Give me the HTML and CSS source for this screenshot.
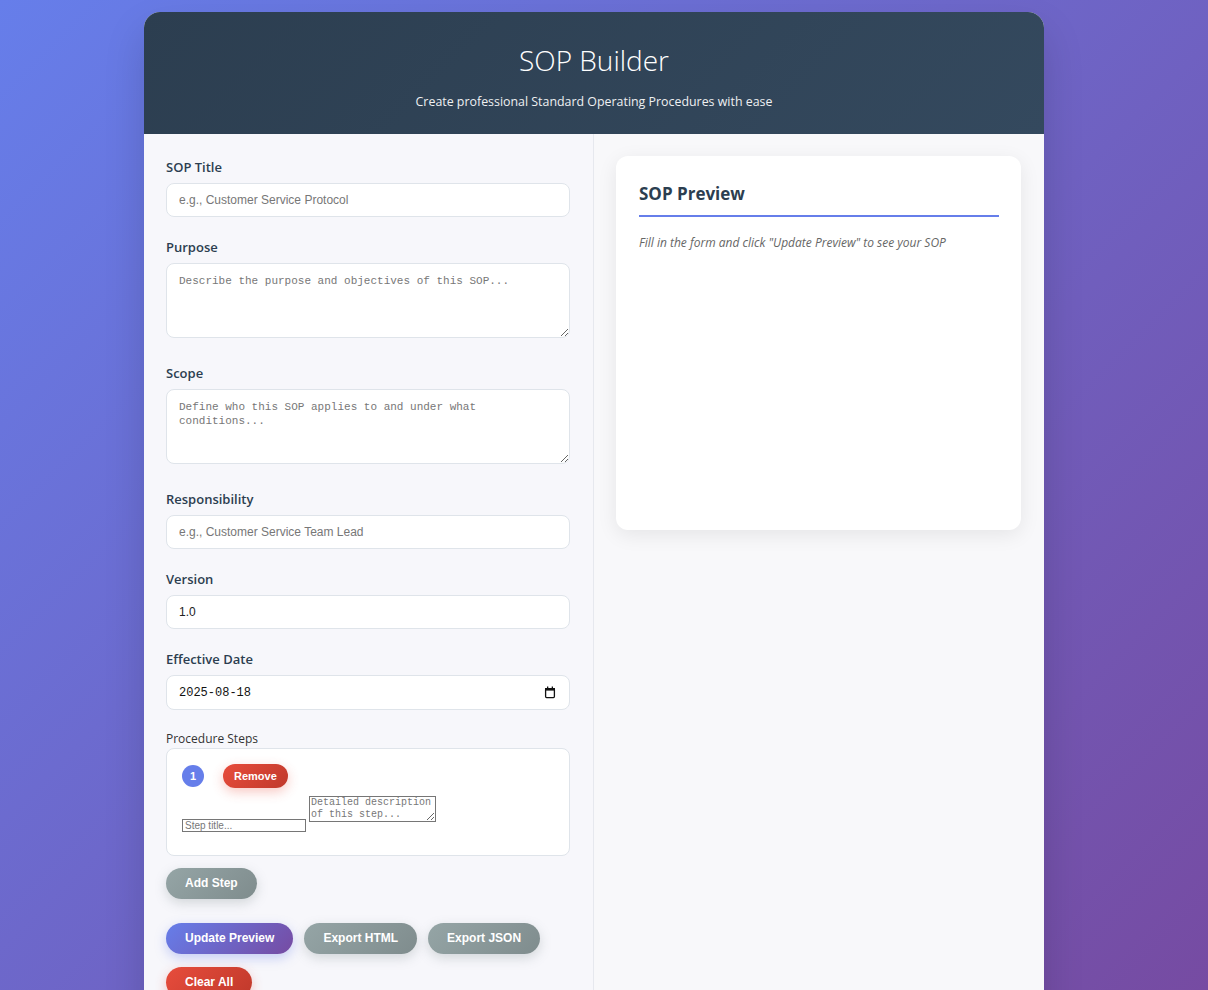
FILE: index.html
```html
<!DOCTYPE html>
<html lang="en">
<head>
<meta charset="utf-8">
<title>SOP Builder</title>
<link rel="stylesheet" href="styles.css">
</head>
<body>
<div class="container">
  <header class="header">
    <h1>SOP Builder</h1>
    <p>Create professional Standard Operating Procedures with ease</p>
  </header>
  <div class="main">
    <section class="form-panel">
      <div class="form-group">
        <label>SOP Title</label>
        <input type="text" class="field" placeholder="e.g., Customer Service Protocol">
      </div>
      <div class="form-group tall">
        <label>Purpose</label>
        <textarea class="field area" placeholder="Describe the purpose and objectives of this SOP..."></textarea>
      </div>
      <div class="form-group tall">
        <label>Scope</label>
        <textarea class="field area" placeholder="Define who this SOP applies to and under what conditions..."></textarea>
      </div>
      <div class="form-group">
        <label>Responsibility</label>
        <input type="text" class="field" placeholder="e.g., Customer Service Team Lead">
      </div>
      <div class="form-group">
        <label>Version</label>
        <input type="text" class="field" value="1.0">
      </div>
      <div class="form-group">
        <label>Effective Date</label>
        <div class="date-wrap">
          <input type="text" class="field date" value="2025-08-18">
          <svg class="cal-icon" width="12" height="13" viewBox="0 0 12 13" aria-hidden="true">
            <rect x="1.6" y="2.6" width="8.8" height="9" rx="1" fill="none" stroke="#111" stroke-width="1.3"/>
            <rect x="1" y="2" width="10" height="2.6" fill="#111"/>
            <rect x="3" y="0.5" width="1.3" height="2" fill="#111"/>
            <rect x="7.7" y="0.5" width="1.3" height="2" fill="#111"/>
          </svg>
        </div>
      </div>
      <div class="steps-label">Procedure Steps</div>
      <div class="steps">
        <div class="step">
          <div class="step-head">
            <span class="step-num">1</span>
            <button class="btn btn-red btn-small">Remove</button>
          </div>
          <div class="step-fields">
            <input type="text" class="step-title" placeholder="Step title...">
            <textarea class="step-desc" placeholder="Detailed description of this step..."></textarea>
          </div>
        </div>
      </div>
      <button class="btn btn-gray add-step">Add Step</button>
      <div class="actions">
        <button class="btn btn-primary">Update Preview</button>
        <button class="btn btn-gray">Export HTML</button>
        <button class="btn btn-gray">Export JSON</button>
        <button class="btn btn-red">Clear All</button>
      </div>
    </section>
    <section class="preview-panel">
      <div class="preview-card">
        <h2>SOP Preview</h2>
        <p class="hint">Fill in the form and click "Update Preview" to see your SOP</p>
      </div>
    </section>
  </div>
</div>
</body>
</html>
```
FILE: styles.css
```css
* { box-sizing: border-box; }

html, body { height: 100%; }

body {
  margin: 0;
  padding: 12px 20px 12px 0;
  font-family: "Open Sans", "Noto Sans", sans-serif;
  background: linear-gradient(135deg, #667eea 0%, #764ba2 100%);
  background-attachment: fixed;
  color: #2c3e50;
}

.container {
  width: 900px;
  margin: 0 auto;
  background: #fff;
  border-radius: 16px;
  overflow: hidden;
  box-shadow: 0 20px 40px rgba(0, 0, 0, 0.15);
}

.header {
  background: linear-gradient(135deg, #2c3e50 0%, #34495e 100%);
  color: #fff;
  text-align: center;
  padding: 29px 20px 23px;
}

.header h1 {
  margin: 0 0 13px;
  font-size: 28px;
  font-weight: 300;
  line-height: 38px;
}

.header p {
  margin: 0;
  font-size: 12.4px;
  line-height: 19px;
  opacity: 0.92;
}

.main {
  display: grid;
  grid-template-columns: 450px 450px;
}

.form-panel {
  background: #f7f7fb;
  border-right: 1px solid #e6e8ee;
  padding: 23px 23px 40px 22px;
}

.form-group { margin-bottom: 20px; }
.form-group.tall { margin-bottom: 25px; }

.form-group label {
  display: block;
  font-size: 13px;
  font-weight: 600;
  line-height: 20px;
  margin-bottom: 6px;
  color: #2c3e50;
}

.field {
  display: block;
  width: 100%;
  border: 1px solid #dfe4ea;
  border-radius: 8px;
  background: #fff;
  padding: 9px 12px;
  font-family: "Liberation Sans", Arial, sans-serif;
  font-size: 12px;
  line-height: 14px;
  color: #222;
  outline: none;
}

.field::placeholder { color: #777; }

.area {
  height: 75px;
  font-family: "Liberation Mono", "DejaVu Sans Mono", monospace;
  font-size: 11px;
  line-height: 14px;
  padding: 10px 12px;
  resize: vertical;
}

.date-wrap { position: relative; }

.date {
  height: 35px;
  font-family: "Liberation Mono", "DejaVu Sans Mono", monospace;
  font-size: 12px;
  color: #111;
}

.cal-icon {
  position: absolute;
  right: 14px;
  top: 11px;
}

.steps-label {
  font-size: 12px;
  line-height: 16px;
  color: #333;
  padding-top: 1px;
  margin: 0 0 1px;
}

.steps {
  background: #fff;
  border: 1px solid #dfe4ea;
  border-radius: 8px;
  padding: 15px;
}

.step { padding-bottom: 8px; }

.step-head {
  display: flex;
  align-items: center;
  gap: 19px;
}

.step-num {
  width: 22px;
  height: 22px;
  border-radius: 50%;
  background: #667eea;
  color: #fff;
  font-family: "Liberation Sans", Arial, sans-serif;
  font-weight: 700;
  font-size: 11px;
  display: flex;
  align-items: center;
  justify-content: center;
}

.step-fields {
  display: flex;
  align-items: flex-start;
  gap: 3px;
  margin-top: 8px;
}

.step-title {
  margin-top: 23px;
  width: 124px;
  height: 13px;
  border: 1px solid #767676;
  padding: 0 2px;
  font-family: "Liberation Sans", Arial, sans-serif;
  font-size: 10px;
  line-height: 11px;
  outline: none;
}

.step-title::placeholder { color: #777; }

.step-desc {
  width: 127px;
  height: 26px;
  border: 1px solid #767676;
  padding: 0 1px;
  font-family: "Liberation Mono", "DejaVu Sans Mono", monospace;
  font-size: 10px;
  line-height: 12px;
  resize: both;
  outline: none;
}

.step-desc::placeholder { color: #777; }

.btn {
  border: none;
  border-radius: 999px;
  color: #fff;
  font-family: "Liberation Sans", Arial, sans-serif;
  font-weight: 700;
  font-size: 12px;
  line-height: 15px;
  padding: 8px 19px;
  cursor: pointer;
}

.btn-small {
  font-size: 11px;
  line-height: 14px;
  padding: 5px 11px;
}

.btn-gray {
  background: linear-gradient(135deg, #95a5a6 0%, #7f8c8d 100%);
  box-shadow: 0 4px 12px rgba(127, 140, 141, 0.3);
}

.btn-red {
  background: linear-gradient(135deg, #e74c3c 0%, #c0392b 100%);
  box-shadow: 0 4px 12px rgba(231, 76, 60, 0.3);
}

.btn-primary {
  background: linear-gradient(135deg, #667eea 0%, #764ba2 100%);
  box-shadow: 0 4px 12px rgba(102, 126, 234, 0.35);
}

.add-step { margin-top: 12px; }

.actions {
  display: flex;
  flex-wrap: wrap;
  column-gap: 11px;
  row-gap: 13px;
  margin-top: 24px;
}

.preview-panel {
  background: #f8f8fa;
  padding: 22px 23px 22px 22px;
}

.preview-card {
  background: #fff;
  border-radius: 12px;
  box-shadow: 0 5px 20px rgba(0, 0, 0, 0.08);
  padding: 25px 22px 23px 23px;
  min-height: 374px;
}

.preview-card h2 {
  margin: 0;
  font-size: 17px;
  font-weight: 700;
  line-height: 26px;
  color: #2c3e50;
  padding-bottom: 8px;
  border-bottom: 2px solid #667eea;
}

.hint {
  margin: 17px 0 0;
  font-size: 12px;
  line-height: 18px;
  font-style: italic;
  color: #666;
}
```
